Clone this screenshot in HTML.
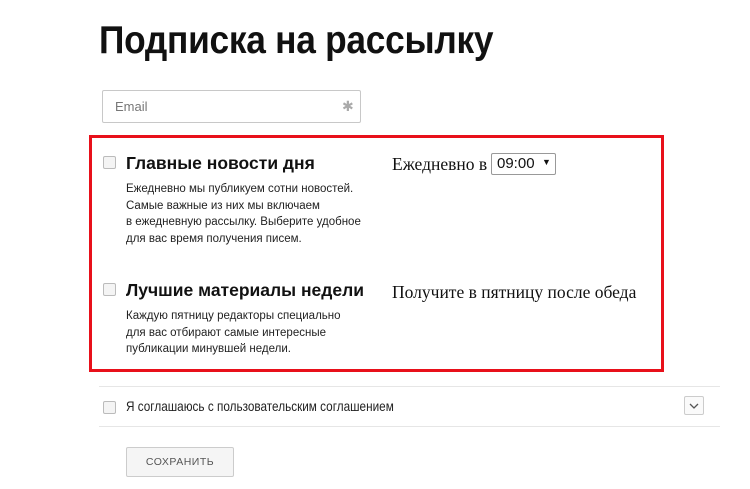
<!DOCTYPE html>
<html><head><meta charset="utf-8"><style>
body{margin:0;width:750px;height:489px;background:#fff;font-family:"Liberation Sans",sans-serif;position:relative;overflow:hidden;color:#111}
.a{position:absolute;white-space:nowrap}
h1{position:absolute;left:99px;top:19px;margin:0;font-size:39px;font-weight:bold;letter-spacing:-0.3px;color:#111;transform:scaleX(0.905);transform-origin:left;white-space:nowrap}
.email{left:102px;top:90px;width:257px;height:31px;border:1px solid #c8c8c8;border-radius:2px}
.cb{position:absolute;width:11px;height:11px;border:1px solid #bbb;border-radius:2px;background:#f4f4f4}
.red{left:89px;top:135px;width:569px;height:231px;border:3px solid #e8101a}
.hd{font-size:17.5px;font-weight:bold;color:#111}
.ds{font-size:11.5px;line-height:16.7px;color:#222}
.sr{font-family:"Liberation Serif",serif;font-size:17.5px;color:#111}
.line{position:absolute;left:99px;width:621px;height:1px;background:#e6e6e6}
</style></head><body>
<h1>Подписка на рассылку</h1>
<div class="a email"><span class="a" style="left:12px;top:8px;font-size:13px;color:#777">Email</span><span class="a" style="left:239px;top:7px;font-size:14px;color:#aaa">✱</span></div>
<div class="a red"></div>
<div class="cb" style="left:103px;top:156px"></div>
<div class="a hd" style="left:126px;top:153px">Главные новости дня</div>
<div class="a ds" style="left:126px;top:181px">Ежедневно мы публикуем сотни новостей.<br>Самые важные из них мы включаем<br>в ежедневную рассылку. Выберите удобное<br>для вас время получения писем.</div>
<div class="a sr" style="left:392px;top:154px">Ежедневно в</div>
<div class="a" style="left:491px;top:153px;width:63px;height:20px;border:1px solid #999;border-radius:2px;font-size:15px;color:#111"><span class="a" style="left:5px;top:1px">09:00</span><span class="a" style="left:50px;top:3px;font-size:9px">▼</span></div>
<div class="cb" style="left:103px;top:283px"></div>
<div class="a hd" style="left:126px;top:280px">Лучшие материалы недели</div>
<div class="a ds" style="left:126px;top:308px">Каждую пятницу редакторы специально<br>для вас отбирают самые интересные<br>публикации минувшей недели.</div>
<div class="a sr" style="left:392px;top:282px">Получите в пятницу после обеда</div>
<div class="line" style="top:386px"></div>
<div class="line" style="top:426px"></div>
<div class="cb" style="left:103px;top:401px"></div>
<div class="a" style="left:126px;top:398px;font-size:14px;color:#222;transform:scaleX(0.84);transform-origin:left">Я соглашаюсь с пользовательским соглашением</div>
<div class="a" style="left:684px;top:396px;width:18px;height:17px;border:1px solid #ccc;border-radius:2px;background:#fafafa"><svg width="18" height="17" style="position:absolute;left:0;top:0"><path d="M5 7l4 4 4-4" fill="none" stroke="#555" stroke-width="1.3"/></svg></div>
<div class="a" style="left:126px;top:447px;width:106px;height:28px;border:1px solid #ccc;border-radius:2px;background:#f5f5f5;font-size:10.5px;color:#555;text-align:center;line-height:28px;letter-spacing:0.5px">СОХРАНИТЬ</div>
</body></html>
